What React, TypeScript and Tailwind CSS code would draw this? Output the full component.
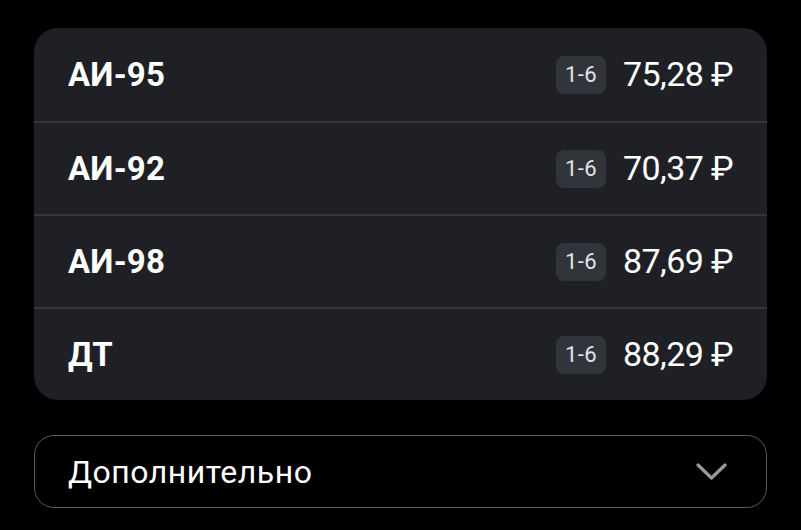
const fuels = [
  { name: "АИ-95", price: "75,28" },
  { name: "АИ-92", price: "70,37" },
  { name: "АИ-98", price: "87,69" },
  { name: "ДТ", price: "88,29" },
];

export default function App() {
  return (
    <div
      className="w-[801px] h-[530px] bg-black pt-[28px] px-[34px] overflow-hidden"
      style={{ fontFamily: "Roboto, 'Noto Sans', sans-serif" }}
    >
      <div className="bg-[#1f2026] rounded-[24px] overflow-hidden">
        {fuels.map((fuel, i) => (
          <div
            key={fuel.name}
            className={`h-[93px] flex items-center justify-between px-[34px] ${
              i > 0 ? "border-t-2 border-[#35363c]" : ""
            }`}
          >
            <span className="text-white text-[33px] font-bold tracking-[0.2px]">{fuel.name}</span>
            <div className="flex items-center gap-[17px]">
              <span className="h-[38px] w-[50px] rounded-[8px] bg-[#32343b] text-[#e2e2e4] text-[22px] tracking-[0.5px] flex items-center justify-center">
                1-6
              </span>
              <span className="text-white text-[34px] tracking-[-0.6px]">{fuel.price} ₽</span>
            </div>
          </div>
        ))}
      </div>

      <div className="mt-[35px] h-[73px] rounded-[20px] border-[1.5px] border-[#5a5a5c] flex items-center justify-between pl-[33px] pr-[39px]">
        <span className="text-white text-[32px] tracking-[0.5px]">Дополнительно</span>
        <svg width="31" height="18" viewBox="0 0 31 18" fill="none">
          <path
            d="M2 2 L15.5 15 L29 2"
            stroke="#9a9a9c"
            strokeWidth="3.2"
            strokeLinecap="round"
            strokeLinejoin="round"
          />
        </svg>
      </div>
    </div>
  );
}
